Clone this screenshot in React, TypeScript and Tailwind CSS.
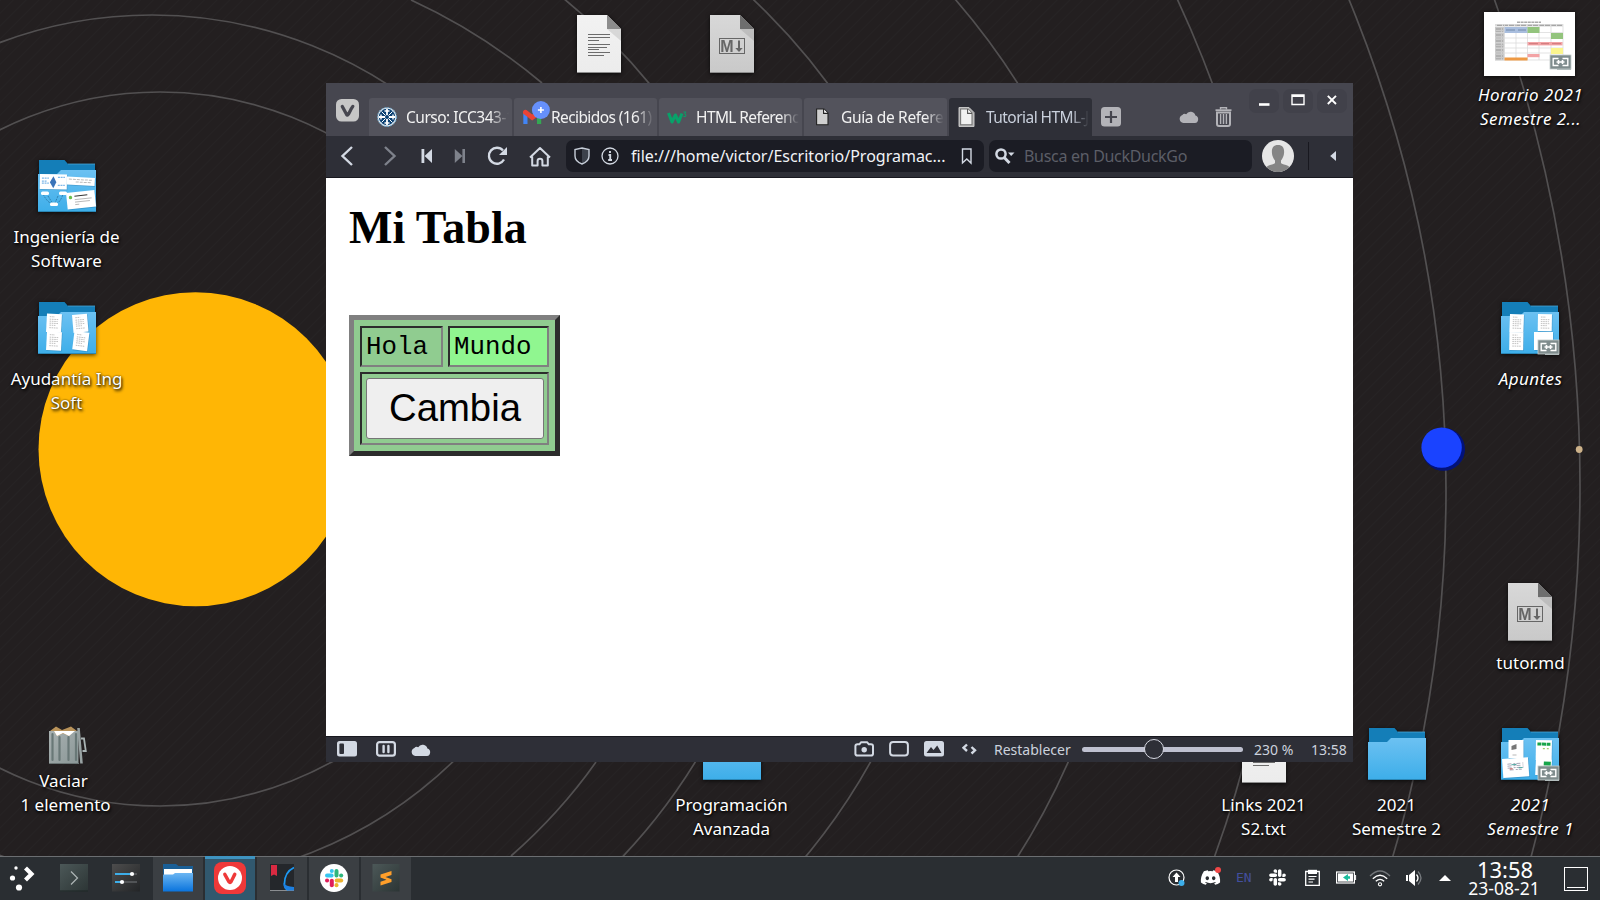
import React from "react";
import { FaDiscord, FaSlack } from "react-icons/fa";

const labelShadow = "[text-shadow:1px_2px_3px_rgba(0,0,0,0.9),0_0_2px_rgba(0,0,0,0.8)]";

function Wallpaper() {
  return (
    <svg className="absolute left-0 top-0" width="1600" height="900" viewBox="0 0 1600 900">
      <defs>
        <pattern id="weave" width="9" height="9" patternUnits="userSpaceOnUse" patternTransform="rotate(45)">
          <rect width="9" height="9" fill="#231f20" />
          <rect width="1" height="9" fill="#262324" />
        </pattern>
      </defs>
      <rect width="1600" height="900" fill="url(#weave)" />
      <g fill="none" stroke="#525051" strokeWidth="1.7">
        <circle cx="160" cy="449" r="357" />
        <circle cx="152" cy="449" r="434" />
        <path d="M411 0Q481 32 542 83" />
        <path d="M596 762Q560 813 511 856" />
        <circle cx="196" cy="455" r="586" />
        <circle cx="322" cy="456" r="628" />
        <circle cx="409" cy="470" r="721" />
        <circle cx="158" cy="473" r="1124" />
        <circle cx="158" cy="490" r="1288" />
        <circle cx="155" cy="486" r="1425" />
      </g>
      <circle cx="195.5" cy="449.2" r="157" fill="#ffb605" />
      <circle cx="1443.5" cy="449.3" r="21.5" fill="#02127a" />
      <circle cx="1441.6" cy="447.6" r="20.2" fill="#1a43ff" />
      <circle cx="1579.2" cy="449.5" r="3.4" fill="#cdb28a" />
    </svg>
  );
}

function LinkEmblem({ x, y }: { x: number; y: number }) {
  return (
    <g transform={`translate(${x} ${y})`}>
      <path d="M7 13H21V15H7z" fill="#a9b3b3" />
      <rect width="21" height="14" fill="#7f8c8d" stroke="#c4cccc" strokeWidth="0.8" />
      <path d="M8.5 3.5H3.2V10.5H8.5M12.5 3.5H17.8V10.5H12.5" fill="none" stroke="#fff" strokeWidth="1.4" />
      <path d="M6.5 7H14.5M8.5 5V9M12.5 5V9" fill="none" stroke="#fff" strokeWidth="1.6" />
    </g>
  );
}

function Paper({ x, y, w, h, r, children }: { x: number; y: number; w: number; h: number; r: number; children?: React.ReactNode }) {
  return (
    <g transform={`translate(${x} ${y}) rotate(${r})`}>
      <rect x="0.6" y="0.8" width={w} height={h} fill="#1d6f9f" opacity="0.4" />
      <rect width={w} height={h} fill="#fff" />
      {children}
    </g>
  );
}

const Scribble = () => (
  <path d="M3 3H8M3 5.5H12M3 7.5H11M3 9.5H12M3 11.5H9M3 14H12" stroke="#999" strokeWidth="0.6" strokeDasharray="1.6 0.7" fill="none" />
);

function Folder({ children, link }: { children?: React.ReactNode; link?: boolean }) {
  return (
    <svg width="62" height="56" viewBox="0 0 62 56" className="drop-shadow-[0_1px_2px_rgba(0,0,0,0.7)]">
      <defs>
        <linearGradient id="folderFront" x1="0" y1="0" x2="0" y2="1">
          <stop offset="0" stopColor="#6cc1f2" />
          <stop offset="1" stopColor="#3daee9" />
        </linearGradient>
      </defs>
      <path d="M1 0H26.5L30 4H57V18H1z" fill="#147eb8" />
      <path d="M30 4H57" stroke="#4aa6d6" strokeWidth="0.8" />
      <path d="M0 14H19L23 10H58V52H0z" fill="url(#folderFront)" />
      <path d="M0 51.5H58" stroke="#2a86b5" />
      {children}
      {link && <LinkEmblem x={37} y={38} />}
    </svg>
  );
}

function Doc({ md }: { md?: boolean }) {
  const id = md ? "sheetMd" : "sheetTxt";
  return (
    <svg width="44" height="58" viewBox="0 0 44 58" className="drop-shadow-[0_1px_2px_rgba(0,0,0,0.7)]">
      <defs>
        <linearGradient id={id} x1="0" y1="0" x2="0" y2="1">
          <stop offset="0" stopColor={md ? "#d8d8d8" : "#f2f2f2"} />
          <stop offset="1" stopColor={md ? "#c9c9c9" : "#ececec"} />
        </linearGradient>
      </defs>
      <path d="M0 0H30L44 14V58H0z" fill={`url(#${id})`} />
      <path d="M30 14H44V26z" fill="#000" opacity="0.1" />
      <path d="M30 0L44 14H30z" fill={md ? "#6e6e6e" : "#8c8c8c"} />
      <path d="M0 57.5H44" stroke="#8d8d8d" />
      {md ? (
        <g>
          <rect x="9.5" y="23.5" width="25" height="15" fill="none" stroke="#666" />
          <text x="10.2" y="36.6" fontSize="16" fontWeight="700" fill="#666" fontFamily="Liberation Sans, sans-serif">M</text>
          <path d="M29 25.5V35" stroke="#666" strokeWidth="2" />
          <path d="M25.3 33H32.7L29 37z" fill="#666" />
        </g>
      ) : (
        <path d="M11 19.5H33M11 22.5H33M11 25.5H22M11 29.5H33M11 32.5H30M11 34.5H22M11 37.5H33M11 40.5H27" stroke="#6c6c6c" strokeWidth="1" />
      )}
    </svg>
  );
}

function Place({ at, children }: { at: string; children: React.ReactNode }) {
  return <div className={`absolute ${at}`}>{children}</div>;
}

function Label({ at, lines, italic }: { at: string; lines: string[]; italic?: boolean }) {
  return (
    <div className={`absolute w-[133px] text-center text-[17px] leading-[24px] whitespace-nowrap text-white ${labelShadow} ${italic ? "tracking-[0.45px] italic" : ""} ${at}`}>
      {lines.map((l) => (
        <div key={l}>{l}</div>
      ))}
    </div>
  );
}

function Schedule() {
  return (
    <svg width="91" height="64" viewBox="0 0 91 64" className="drop-shadow-[0_1px_2px_rgba(0,0,0,0.7)]">
      <rect width="91" height="64" fill="#fff" />
      <path d="M33 10.2H57" stroke="#aaa" strokeWidth="1.5" strokeDasharray="3 0.6" />
      <rect x="11" y="12" width="68" height="2.6" fill="#ddd" />
      <rect x="11" y="15" width="9.5" height="33.5" fill="#c9c9c9" />
      <path d="M13 13.3H78M12 17H19M12 20H19M12 23H19M12 26H19M12 29H19M12 32H19M12 35H19M12 38H19M12 41H19M12 44H19M12 47H19" stroke="#999" strokeWidth="1" strokeDasharray="5 1" />
      <path d="M11 20.5H79M11 26H79M11 31H79M11 36H79M11 41H79M11 48H79M20.5 12V48M32 12V48M43.5 12V48M55 12V48M67 12V48M79 12V48" stroke="#dcdcdc" strokeWidth="0.8" />
      <rect x="20.5" y="15" width="23" height="6" fill="#a9bede" />
      <path d="M22 18H31M34 18H42" stroke="#7389a8" />
      <rect x="43.5" y="15" width="12" height="6" fill="#93c47d" />
      <rect x="67" y="21" width="12" height="6" fill="#93c47d" />
      <rect x="43.5" y="30" width="35" height="3.4" fill="#f3a3a5" />
      <path d="M45 31.7H54M57 31.7H65M68 31.7H77" stroke="#c26a6d" strokeWidth="0.8" />
      <rect x="43.5" y="42" width="12" height="3.2" fill="#f3a3a5" />
      <rect x="67" y="36" width="12" height="6" fill="#fbf58e" />
      <rect x="20.5" y="45.5" width="23" height="3" fill="#ee9a45" />
      <LinkEmblem x={66} y={43} />
    </svg>
  );
}

function Trash() {
  return (
    <svg width="40" height="40" viewBox="0 0 40 40">
      <defs>
        <linearGradient id="can" x1="0" y1="0" x2="1" y2="1">
          <stop offset="0" stopColor="#a8b1b1" />
          <stop offset="1" stopColor="#8b9797" />
        </linearGradient>
      </defs>
      <path d="M1 5L7 0.5L13 4L22 0.5L28 5V12H1z" fill="#b9935a" />
      <path d="M0 5H5L8 10L14 7.5L20 10L25 5H29.5V37H0z" fill="url(#can)" />
      <path d="M5 5H26L20 10L14 7L8 10z" fill="#fff" />
      <path d="M3.5 8V34M10.5 11V34M19.5 11V34M27 8V34" stroke="#697877" strokeWidth="2.2" strokeLinecap="round" />
      <path d="M0 37.5H30" stroke="#6a7474" />
      <path d="M29.5 2L32.5 37.5" stroke="#98a2a2" strokeWidth="2.6" />
      <path d="M32 12.5H35L36.8 25H33.5" fill="none" stroke="#a9b3b3" strokeWidth="1.8" />
    </svg>
  );
}

function Desktop() {
  return (
    <>
      <Place at="left-[38px] top-[160px]">
        <Folder>
          <Paper x={2} y={14} w={27} h={15} r={1}>
            <path d="M2 4H9M2 7H7M2 9H9M18 3H25M18 11H25" stroke="#7db7e8" strokeWidth="1.2" strokeDasharray="2 0.7" />
            <path d="M13.5 2L16.5 8L13.5 14L10 8z" fill="#3b74b9" />
          </Paper>
          <Paper x={29} y={16.5} w={28} h={8} r={3}>
            <path d="M2 2.5H26M9 5H24" stroke="#bbb" strokeDasharray="3 1" strokeWidth="1" />
          </Paper>
          <path d="M5 34Q10 44 16 44Q22 44 25 34M10 36L15 44M20 36L17 43" fill="none" stroke="#226a95" strokeWidth="0.7" strokeDasharray="2 1" />
          <rect x="3" y="31.5" width="8" height="3.6" rx="1.5" fill="#fff" />
          <rect x="21" y="31.5" width="8" height="3.6" rx="1.5" fill="#fff" />
          <rect x="12" y="42.5" width="8" height="3.6" rx="1.5" fill="#fff" />
          <Paper x={28} y={33} w={28.5} h={16.5} r={-6}>
            <circle cx="4" cy="5" r="1.7" fill="#6abf4b" />
            <path d="M8 4H21" stroke="#333" strokeWidth="1" />
            <path d="M8 7.5H25M8 10H23M8 12.5H12" stroke="#aaa" strokeWidth="0.8" />
          </Paper>
        </Folder>
      </Place>
      <Label at="left-0 top-[225px]" lines={["Ingeniería de", "Software"]} />

      <Place at="left-[38px] top-[302px]">
        <Folder>
          <Paper x={9} y={11.5} w={15} h={18.5} r={3}><Scribble /></Paper>
          <Paper x={9} y={29.5} w={15} h={18.5} r={3}><Scribble /></Paper>
          <Paper x={34} y={13} w={15} h={18} r={-5}><Scribble /></Paper>
          <Paper x={36.5} y={29} w={15} h={18.5} r={7}><Scribble /></Paper>
        </Folder>
      </Place>
      <Label at="left-0 top-[367px]" lines={["Ayudantía Ing", "Soft"]} />

      <Place at="left-[49px] top-[726px]"><Trash /></Place>
      <Label at="left-[-3px] top-[769px]" lines={["Vaciar"]} />
      <Label at="left-[-1px] top-[793px]" lines={["1 elemento"]} />

      <Place at="left-[577px] top-[15px]"><Doc /></Place>
      <Place at="left-[710px] top-[15px]"><Doc md /></Place>

      <Place at="left-[703px] top-[728px]"><Folder /></Place>
      <Label at="left-[665px] top-[793px]" lines={["Programación", "Avanzada"]} />

      <Place at="left-[1242px] top-[725px]"><Doc /></Place>
      <Label at="left-[1197px] top-[793px]" lines={["Links 2021", "S2.txt"]} />

      <Place at="left-[1368px] top-[728px]"><Folder /></Place>
      <Label at="left-[1330px] top-[793px]" lines={["2021", "Semestre 2"]} />

      <Place at="left-[1501px] top-[728px]">
        <Folder link>
          <Paper x={7.5} y={12} w={15} h={18} r={0}>
            <path d="M3 6L8 4V9L3 10z" fill="#777" />
            <path d="M4 15H8" stroke="#999" strokeWidth="0.7" />
          </Paper>
          <Paper x={35} y={12} w={16} h={20} r={1}>
            <path d="M1.5 4H14.5" stroke="#17a54a" strokeWidth="3" strokeDasharray="4 0.6" />
            <path d="M7 8.5H14" stroke="#9bcb67" strokeWidth="1.2" strokeDasharray="2 2" />
          </Paper>
          <Paper x={35} y={31} w={16} h={16} r={3}>
            <path d="M8 4H15" stroke="#17a54a" strokeWidth="4" />
          </Paper>
          <Paper x={1} y={31} w={26} h={19} r={-4}>
            <path d="M5 5.5H21M5 7.5H21M5 9.5H21M7 11.5H19" stroke="#a9a9b8" strokeWidth="1" strokeDasharray="4 2 2 1" />
            <path d="M9 6.5H14M16 10H20" stroke="#4ba7a0" strokeWidth="1" />
            <path d="M7 10.5H10" stroke="#c0504d" strokeWidth="1" />
          </Paper>
        </Folder>
      </Place>
      <Label italic at="left-[1464px] top-[793px]" lines={["2021", "Semestre 1"]} />

      <Place at="left-[1508px] top-[583px]"><Doc md /></Place>
      <Label at="left-[1464px] top-[651px]" lines={["tutor.md"]} />

      <Place at="left-[1501px] top-[302px]">
        <Folder link>
          <Paper x={9} y={12} w={14} h={18} r={2}><Scribble /></Paper>
          <Paper x={8.5} y={30} w={14} h={18} r={1}><Scribble /></Paper>
          <Paper x={37} y={12} w={14} h={17} r={1}><Scribble /></Paper>
          <Paper x={33} y={30} w={19} h={18} r={0} />
        </Folder>
      </Place>
      <Label italic at="left-[1464px] top-[367px]" lines={["Apuntes"]} />

      <Place at="left-[1484px] top-[12px]"><Schedule /></Place>
      <Label italic at="left-[1464px] top-[83px]" lines={["Horario 2021", "Semestre 2..."]} />
    </>
  );
}

const tabFade = "[mask-image:linear-gradient(to_right,#000_82%,transparent_100%)]";

function Tab({ icon, slot, title, active, tracking }: { icon: React.ReactNode; slot: string; title: string; active?: boolean; tracking: string }) {
  return (
    <div className={`flex h-[38px] w-[143px] items-center rounded-t-[3px] ${active ? "bg-[#2e2f37] text-[#c9d0dc]" : "bg-[#53535c] text-[#f2f2f2]"}`}>
      <div className={`flex shrink-0 items-center justify-start ${slot}`}>{icon}</div>
      <div className={`mr-[3px] min-w-0 flex-1 overflow-hidden text-[15.5px] leading-6 whitespace-nowrap ${tracking} ${tabFade}`}>{title}</div>
    </div>
  );
}

const Cloud = ({ color }: { color: string }) => (
  <svg width="20" height="13" viewBox="0 0 20 13">
    <path d="M4.3 13A4.2 4.2 0 0 1 3.4 4.9Q5 2.8 7.2 4.2A5 5 0 0 1 16.4 5.6A3.8 3.8 0 0 1 16 13z" fill={color} />
  </svg>
);

const PageIcon = ({ active }: { active?: boolean }) => (
  <svg width="17" height="20" viewBox="0 0 17 20">
    {active && <path d="M1 0.5H11L16 5.5V19.5H1z" fill="#b5b5b5" stroke="#c5c5c5" />}
    <path d="M2.6 2H10L14 6V17.8H2.6z" fill={active ? "#f1f1f1" : "#cfcfcf"} stroke={active ? "#777" : "#222"} strokeWidth="1.1" />
    <path d="M9.6 2V6.4H14" fill="#fff" stroke={active ? "#555" : "#222"} strokeWidth="1.1" />
  </svg>
);

function TabStrip() {
  return (
    <div className="flex h-[53px] shrink-0 bg-[#46464f]">
      <svg className="mt-4 ml-[10px] shrink-0" width="23" height="23" viewBox="0 0 23 23">
        <rect width="23" height="22.5" rx="5.5" fill="#c6c6c6" />
        <path d="M6.3 7.5L10.5 15.3Q11.4 16.8 12.4 15.2L14.4 11.4Q15.3 9.5 16.8 7.4" fill="none" stroke="#46464f" strokeWidth="3.3" strokeLinecap="round" strokeLinejoin="round" />
      </svg>
      <div className="mt-[15px] ml-[10px] flex gap-[2px]">
        <Tab
          title="Curso: ICC343-1"
          slot="w-[37px] pl-2"
          tracking="tracking-[-0.5px]"
          icon={
            <svg width="20" height="20" viewBox="0 0 20 20">
              <circle cx="10" cy="10" r="9.5" fill="#dfebf3" stroke="#6ea4c8" strokeDasharray="2 1.2" />
              <circle cx="10" cy="10" r="8.2" fill="#0b4173" />
              <path d="M10 2V18M2 10H18" stroke="#fff" strokeWidth="1.8" />
              <path d="M4.5 4.5L15.5 15.5M15.5 4.5L4.5 15.5" stroke="#fff" strokeWidth="1" />
              <path d="M7.5 4H12.5M7.5 16H12.5M4 7.5V12.5M16 7.5V12.5" stroke="#fff" strokeWidth="1.4" />
              <circle cx="10" cy="10" r="2" fill="#0b4173" />
            </svg>
          }
        />
        <Tab
          title="Recibidos (161)"
          slot="w-[37px] pl-[8px]"
          tracking="tracking-[-0.6px]"
          icon={
            <svg width="29" height="26" viewBox="0 0 29 26" className="mb-[11px]">
              <path d="M1.3 13V25H5.5V14z" fill="#4285f4" />
              <path d="M15 14V25H19.2V13z" fill="#34a853" />
              <path d="M1 12.5Q2 9.8 4.5 11L10.2 15.5L16 11Q18.5 9.8 19.5 12.5V14.5L10.2 21.5L1 14.5z" fill="#ea4335" />
              <circle cx="18.9" cy="11" r="9" fill="#6690fb" />
              <path d="M18.9 8V14M15.9 11H21.9" stroke="#fff" strokeWidth="1.6" />
            </svg>
          }
        />
        <Tab
          title="HTML Reference"
          slot="w-[37px] pl-2"
          tracking="tracking-[-0.6px]"
          icon={
            <svg width="21" height="15" viewBox="0 0 21 15">
              <path d="M1.5 3L5 12L8.4 5L11.6 12L15 3.5" fill="none" stroke="#08a169" strokeWidth="3.1" strokeLinejoin="round" />
              <path d="M16.5 2H19L17.6 4Q19.4 4.2 19 5.8Q18.3 7.2 16.4 6.4" fill="none" stroke="#08a169" strokeWidth="1" />
            </svg>
          }
        />
        <Tab title="Guía de Referencia" slot="w-[37px] pl-[10px]" tracking="tracking-[-0.35px]" icon={<PageIcon />} />
        <Tab title="Tutorial HTML-JS" active slot="w-[37px] pl-[9px]" tracking="tracking-[-0.55px]" icon={<PageIcon active />} />
      </div>
      <svg className="mt-6 ml-[9px] shrink-0" width="20" height="20" viewBox="0 0 20 20">
        <rect width="20" height="19.5" rx="3.5" fill="#b3b3b8" />
        <path d="M10 4V16M4 10H16" stroke="#46464f" strokeWidth="2.2" />
      </svg>
      <div className="mt-[27px] ml-[58px]"><Cloud color="#b3b3b8" /></div>
      <svg className="mt-6 ml-[16px] shrink-0" width="17" height="20" viewBox="0 0 17 20">
        <path d="M0.5 3.2H16.5" stroke="#b3b3b8" strokeWidth="1.8" />
        <path d="M5.5 2.6V0.8H11.5V2.6" fill="none" stroke="#b3b3b8" strokeWidth="1.4" />
        <path d="M2 5.5H15V17Q15 19 13 19H4Q2 19 2 17z" fill="none" stroke="#b3b3b8" strokeWidth="2" />
        <path d="M5.6 7V17M8.5 7V17M11.4 7V17" stroke="#b3b3b8" strokeWidth="1.4" />
      </svg>
      <div className="mt-[6px] ml-[17px] flex gap-1">
        <div className="flex h-6 w-[30px] items-center justify-center rounded-[7px] bg-[#41414a] pb-[2px]">
          <svg width="12" height="12"><path d="M1 10.5H11.5" stroke="#fff" strokeWidth="2.6" /></svg>
        </div>
        <div className="flex h-6 w-[30px] items-center justify-center rounded-[7px] bg-[#41414a] pb-[2px]">
          <svg width="14" height="12"><path d="M1 1H13V10.5H1zM1 2.2H13" fill="none" stroke="#fff" strokeWidth="1.4" /></svg>
        </div>
        <div className="flex h-6 w-[30px] items-center justify-center rounded-[7px] bg-[#41414a] pb-[2px]">
          <svg width="12" height="12"><path d="M1.8 1.8L10 10M10 1.8L1.8 10" stroke="#fff" strokeWidth="1.9" /></svg>
        </div>
      </div>
    </div>
  );
}

function NavBar() {
  const slot = "flex shrink-0 items-center justify-center";
  return (
    <div className="flex h-[42px] shrink-0 items-center border-b border-[#18181f] bg-[#2e2f37] pb-px">
      <div className={`${slot} w-[42px]`}>
        <svg width="14" height="20"><path d="M12 1L2.5 10L12 19" fill="none" stroke="#d3d9e3" strokeWidth="2.4" /></svg>
      </div>
      <div className={`${slot} w-[44px]`}>
        <svg width="14" height="20"><path d="M2 1L11.5 10L2 19" fill="none" stroke="#7e828b" strokeWidth="2.4" /></svg>
      </div>
      <div className={`${slot} w-[30px]`}>
        <svg width="12" height="16"><path d="M0.5 1H3.3V15H0.5zM11 1V15L3.6 8z" fill="#d3d9e3" /></svg>
      </div>
      <div className={`${slot} w-[35px]`}>
        <svg width="12" height="16"><path d="M11 1H8.4V15H11zM0.8 1V15L8.4 8z" fill="#7e828b" /></svg>
      </div>
      <div className={`${slot} w-[40px]`}>
        <svg width="21" height="20" viewBox="0 0 21 20">
          <path d="M17 13.5A8 8 0 1 1 16 4.5" fill="none" stroke="#d3d9e3" strokeWidth="2.3" />
          <path d="M20 1V9H12z" fill="#d3d9e3" />
        </svg>
      </div>
      <div className={`${slot} w-[46px]`}>
        <svg width="22" height="21" viewBox="0 0 22 21">
          <path d="M1 11.5L11 2L21 11.5M3.2 10.5V19.5H8.6V15Q8.6 12.8 11 12.8Q13.4 12.8 13.4 15V19.5H18.8V10.5" fill="none" stroke="#d3d9e3" strokeWidth="2" strokeLinejoin="round" />
        </svg>
      </div>
      <div className="ml-[3px] flex h-8 w-[418px] shrink-0 items-center rounded-[7px] bg-[#1b1c24]">
        <svg className="ml-2" width="16" height="18" viewBox="0 0 16 18">
          <path d="M8 1L15 2.5V9Q15 14 8 17z" fill="#3c414b" />
          <path d="M8 1L15 2.5V9Q15 14.5 8 17Q1 14.5 1 9V2.5z" fill="none" stroke="#c5ccd7" strokeWidth="1.4" />
        </svg>
        <svg className="ml-[11px]" width="18" height="18" viewBox="0 0 18 18">
          <circle cx="9" cy="9" r="8" fill="none" stroke="#d3d9e3" strokeWidth="1.3" />
          <path d="M9 4V6M7.5 8H9.2V13M7.2 13H11" fill="none" stroke="#d3d9e3" strokeWidth="1.9" />
        </svg>
        <span className="ml-3 w-[316px] text-[16px] whitespace-nowrap text-[#f1f3f7]">file:///home/victor/Escritorio/Programac...</span>
        <svg className="ml-[14px]" width="12" height="17"><path d="M1.5 1H10V15L5.8 11L1.5 15z" fill="none" stroke="#d3d9e3" strokeWidth="1.4" /></svg>
      </div>
      <div className="ml-[5px] flex h-8 w-[263px] shrink-0 items-center rounded-[7px] bg-[#1b1c24]">
        <svg className="ml-[6px]" width="20" height="18" viewBox="0 0 20 18">
          <circle cx="6" cy="7" r="4.6" fill="none" stroke="#d3d9e3" strokeWidth="2.5" />
          <path d="M9.2 10.5L14.5 16" stroke="#d3d9e3" strokeWidth="3" />
          <path d="M13 5.5H19.5L16.2 9z" fill="#d3d9e3" />
        </svg>
        <span className="ml-[9px] text-[16px] tracking-[-0.3px] whitespace-nowrap text-[#5c5e67]">Busca en DuckDuckGo</span>
      </div>
      <svg className="ml-[10px] shrink-0" width="32" height="32" viewBox="0 0 32 32">
        <circle cx="16" cy="16" r="16" fill="#e6e6e6" />
        <path d="M16 5C11.5 5 9.7 8 9.9 12.5C10 16 11.5 18.5 13 20.5V23Q12.5 24 8 25Q5 26 4.6 27.3A16 16 0 0 0 27.4 27.3Q27 26 24 25Q19.5 24 19 23V20.5C20.5 18.5 22 16 22.1 12.5C22.3 8 20.5 5 16 5z" fill="#848484" />
      </svg>
      <div className="ml-[14px] h-7 w-px bg-[#18181f]" />
      <svg className="ml-[20px]" width="8" height="12"><path d="M7 1V11L1.2 6z" fill="#d3d9e3" /></svg>
    </div>
  );
}

function Page() {
  const cell = "border-2 border-t-[#2c2c2c] border-l-[#2c2c2c] border-r-[#808080] border-b-[#808080] text-black";
  return (
    <div className="h-[558px] shrink-0 bg-white pl-[23px] text-black">
      <h1 className="pt-[23px] font-['Liberation_Serif',serif] text-[46px] leading-[53px] font-bold">Mi Tabla</h1>
      <div className="mt-[61px] w-[211px] border-[5px] border-t-[#808080] border-l-[#808080] border-r-[#2c2c2c] border-b-[#2c2c2c] bg-[#90cc90] p-[6px]">
        <div className="flex gap-[5px] font-['Liberation_Mono',monospace] text-[25.8px] leading-[39px]">
          <div className={`h-[41px] w-[83px] pl-1 ${cell}`}>Hola</div>
          <div className={`h-[41px] w-[101px] bg-[#90f690] pl-1 ${cell}`}>Mundo</div>
        </div>
        <div className={`mt-[5px] h-[73px] p-1 ${cell}`}>
          <button className="block h-[61px] w-[178px] rounded-[3px] border border-[#767676] bg-[#efefef] pb-[2px] font-['Liberation_Sans',sans-serif] text-[38.3px] leading-[56px]">Cambia</button>
        </div>
      </div>
    </div>
  );
}

function StatusBar() {
  const c = "#d3d9e3";
  return (
    <div className="flex h-[26px] shrink-0 items-center border-t border-[#18181f] bg-[#2e2f37] pb-px text-[14px] text-[#ccd2dd] [&>*]:shrink-0">
      <svg className="ml-[11px]" width="20" height="16"><rect width="20" height="15.5" rx="2.5" fill={c} /><rect x="2.4" y="2.6" width="4.6" height="10.4" rx="1" fill="#2e2f37" /></svg>
      <svg className="ml-[19px]" width="20" height="16"><rect x="1.1" y="1.1" width="17.8" height="13.6" rx="2.5" fill="none" stroke={c} strokeWidth="2.2" /><path d="M7.6 5V11M12.4 5V11" stroke={c} strokeWidth="2.4" strokeLinecap="round" /></svg>
      <div className="ml-[15px]"><Cloud color={c} /></div>
      <svg className="ml-[423px]" width="21" height="16">
        <path d="M3.5 3.2H5.5L7.2 1.2H13L14.8 3.2H17Q19 3.2 19 5.2V12.8Q19 14.6 17 14.6H3.5Q1.4 14.6 1.4 12.8V5.2Q1.4 3.2 3.5 3.2z" fill="none" stroke={c} strokeWidth="2" /><circle cx="10.2" cy="8.8" r="2.7" fill={c} />
      </svg>
      <svg className="ml-[14px]" width="20" height="16"><rect x="1.1" y="1.1" width="17.8" height="13.4" rx="3" fill="none" stroke={c} strokeWidth="2" /></svg>
      <svg className="ml-[15px]" width="20" height="16"><rect width="20" height="15.5" rx="2.5" fill={c} /><path d="M2.5 12L7 6L9.5 9L13.2 4.5L17.5 12z" fill="#2e2f37" /></svg>
      <svg className="ml-[18px]" width="15" height="12"><path d="M5 1.5L1.5 4.8L5 8M9.5 4L13 7.3L9.5 10.5" fill="none" stroke={c} strokeWidth="2.4" /></svg>
      <span className="ml-[17px] w-[77px] whitespace-nowrap">Restablecer</span>
      <svg className="ml-[11px]" width="162" height="22">
        <path d="M2.5 11.5H158.5" stroke="#bfc1d0" strokeWidth="5" strokeLinecap="round" />
        <circle cx="72" cy="11" r="9.5" fill="#2e2f37" stroke="#d6d8e2" />
      </svg>
      <span className="ml-[10px] w-[57px] whitespace-nowrap">230 %</span>
      <span className="whitespace-nowrap">13:58</span>
    </div>
  );
}

function BrowserWindow() {
  return (
    <div className="absolute top-[83px] left-[326px] flex h-[679px] w-[1027px] flex-col overflow-hidden">
      <TabStrip />
      <NavBar />
      <Page />
      <StatusBar />
    </div>
  );
}

function SlackMark() {
  return (
    <g strokeWidth="4" strokeLinecap="round" fill="none">
      <path d="M7 11.5H11.6" stroke="#36c5f0" /><path d="M11.8 7V7.1" stroke="#36c5f0" />
      <path d="M16.5 7V11.5" stroke="#2eb67d" /><path d="M21.1 11.6H21.2" stroke="#2eb67d" />
      <path d="M16.7 16.5H21.2" stroke="#ecb22e" /><path d="M16.5 21.1V21.2" stroke="#ecb22e" />
      <path d="M11.8 16.7V21.2" stroke="#e01e5a" /><path d="M7 16.5H7.1" stroke="#e01e5a" />
    </g>
  );
}

function Taskbar() {
  const task = "flex h-[43px] w-[50px] items-center justify-center bg-[#3b3f43] pb-px";
  return (
    <div className="absolute top-[856px] left-0 flex h-[44px] w-full items-center border-t border-[#6b6e71] bg-[#2a2e32]">
      <svg className="mb-px ml-[9px] shrink-0" width="26" height="26" viewBox="0 0 26 26" fill="#fff">
        <circle cx="7" cy="3" r="1.7" /><circle cx="3.5" cy="13" r="2.6" /><circle cx="10" cy="22.5" r="3.1" />
        <path d="M16.5 3L22.5 9L16.5 15" fill="none" stroke="#fff" strokeWidth="4.2" />
      </svg>
      <svg className="mb-px ml-[25px] shrink-0" width="28" height="28" viewBox="0 0 28 28">
        <defs><linearGradient id="term" x1="0" y1="0" x2="1" y2="1"><stop offset="0" stopColor="#4c5858" /><stop offset="1" stopColor="#2c3535" /></linearGradient></defs>
        <rect width="28" height="27.5" fill="url(#term)" />
        <path d="M11 7.5L17.5 14L11 20.5" fill="none" stroke="#aeb6b6" strokeWidth="1.2" />
        <path d="M0 27H28" stroke="#1d2424" />
      </svg>
      <svg className="mb-px ml-6 shrink-0" width="28" height="28" viewBox="0 0 28 28">
        <defs><linearGradient id="sett" x1="0" y1="0" x2="1" y2="1"><stop offset="0" stopColor="#4d4d4d" /><stop offset="1" stopColor="#232527" /></linearGradient></defs>
        <rect width="28" height="27.5" fill="url(#sett)" />
        <path d="M3 10H25M3 18H25" stroke="#5d6063" strokeWidth="1.6" />
        <path d="M3 10H20M3 18H10" stroke="#3daee9" strokeWidth="1.8" />
        <circle cx="20" cy="10" r="2.1" fill="#fff" /><circle cx="10" cy="18" r="2.1" fill="#fff" />
      </svg>
      <div className="ml-[13px] flex shrink-0 gap-[2px]">
        <div className={task}>
          <svg width="30" height="28" viewBox="0 0 30 28">
            <defs><linearGradient id="fm" x1="0" y1="0" x2="0" y2="1"><stop offset="0" stopColor="#6cb6f2" /><stop offset="1" stopColor="#0a74dd" /></linearGradient></defs>
            <path d="M0 0H13L15.5 2H30V10H0z" fill="#1a5f96" />
            <rect x="1" y="5" width="28" height="8" fill="#fff" />
            <path d="M0 10.5H10L12 9H30V27.5H0z" fill="url(#fm)" />
          </svg>
        </div>
        <div className="flex h-[43px] w-[50px] flex-col items-center bg-[#31586e]">
          <div className="-mt-px h-[3px] w-full shrink-0 bg-[#3e93c0]" />
          <svg className="mt-[3px]" width="32" height="32" viewBox="0 0 32 32">
            <rect width="32" height="32" rx="8" fill="#ef3939" />
            <circle cx="16" cy="16" r="12" fill="#fff" />
            <path d="M10.8 12.3L15 19.8Q16 21.2 17 19.7L19.2 15.5Q20 14 20.8 12.3" fill="none" stroke="#ef3939" strokeWidth="3.4" strokeLinecap="round" strokeLinejoin="round" />
          </svg>
        </div>
        <div className={task}>
          <svg width="24" height="28" viewBox="0 0 24 28">
            <rect width="24" height="27" fill="#24272b" />
            <path d="M0 26.5H24" stroke="#8a8d90" />
            <path d="M1 1H7V12L4 10.5L1 12z" fill="#da2a42" />
            <path d="M24 3.5Q14.5 8 14.4 20Q14.4 24.5 18 26" fill="none" stroke="#1d99f3" strokeWidth="1.8" />
            <path d="M18 26.5Q13.5 25 13.5 19Q15.5 22.5 24 23V26.5z" fill="#1d7fe0" />
          </svg>
        </div>
        <div className={task}>
          <svg width="28" height="28" viewBox="0 0 28 28"><circle cx="14" cy="14" r="14" fill="#fff" /><SlackMark /></svg>
        </div>
        <div className={task}>
          <svg width="28" height="28" viewBox="0 0 28 28">
            <rect x="0.5" width="27" height="27.5" fill="url(#term)" />
            <path d="M8.5 10.5L19.5 7V11L13.5 13L19.5 15.2V18L8.5 21.5V17.7L14.5 15.7L8.5 13.5z" fill="#ff9f2a" />
          </svg>
        </div>
      </div>
      <div className="ml-auto flex h-full shrink-0 items-center text-white">
        <svg className="mb-[2px]" width="18" height="18" viewBox="0 0 18 18">
          <circle cx="8.5" cy="8.5" r="7.5" fill="none" stroke="#fff" strokeWidth="1.2" />
          <path d="M8.5 3.5L12.5 8H10V13H7V8H4.5z" fill="#fff" /><circle cx="13.5" cy="14" r="3" fill="#3daee9" />
        </svg>
        <div className="relative mb-[2px] ml-[14px] flex w-[22px]">
          <FaDiscord size={21} />
          <div className="absolute top-0 right-[1px] h-[6px] w-[6px] rounded-full bg-[#f04747]" />
        </div>
        <span className="mb-[2px] ml-[14px] w-[20px] font-['DejaVu_Sans_Mono',monospace] text-[13px] tracking-[-0.2px] text-[#434f9e]">EN</span>
        <FaSlack className="mb-[2px] ml-[12px]" size={19} />
        <svg className="mb-[2px] ml-[18px]" width="15" height="17" viewBox="0 0 15 17">
          <path d="M0.7 2.5H14.3V16.3H0.7z" fill="none" stroke="#fff" strokeWidth="1.3" /><path d="M3 0.8H12V5H3z" fill="#fff" /><path d="M3.5 7.5H11.5M3.5 10.2H9.5M3.5 13H8" stroke="#fff" strokeWidth="1.2" />
        </svg>
        <svg className="mb-[2px] ml-[16px]" width="21" height="13" viewBox="0 0 21 13">
          <rect x="0.6" y="1" width="17.8" height="11" fill="none" stroke="#fff" strokeWidth="1.2" /><rect x="2" y="2.4" width="15" height="8.2" fill="#fff" /><path d="M19.6 4V9" stroke="#fff" />
          <path d="M7 6.5L12 3V5.2H14V7.8H12V10z" fill="#1abc9c" />
        </svg>
        <svg className="mb-[2px] ml-[12px]" width="22" height="18" viewBox="0 0 22 18" fill="none">
          <path d="M1 7Q11 -3 21 7" stroke="#72767a" strokeWidth="1.3" /><path d="M3.8 9.8Q11 2.8 18.2 9.8M6.8 12.3Q11 8.5 15.2 12.3" stroke="#fff" strokeWidth="1.3" /><circle cx="11" cy="15.3" r="1.6" stroke="#fff" strokeWidth="1.1" />
        </svg>
        <svg className="mb-[2px] ml-[15px]" width="17" height="18" viewBox="0 0 17 18">
          <path d="M0 6H2V12H0zM3 6L9 1V17L3 12z" fill="#fff" /><path d="M10.5 5.5Q13.5 9 10.5 12.5" fill="none" stroke="#fff" strokeWidth="1.3" /><path d="M12 2.5Q18 9 12 15.5" fill="none" stroke="#777b7f" strokeWidth="1.3" />
        </svg>
        <svg className="mb-px ml-[16px]" width="12" height="6"><path d="M0 6L6 0L12 6z" fill="#fff" /></svg>
        <div className="ml-[13px] w-[80px] text-center whitespace-nowrap">
          <div className="pl-[2px] text-[22px] leading-[20px]">13:58</div>
          <div className="text-[17.5px] leading-[19px]">23-08-21</div>
        </div>
        <svg className="mr-[12px] ml-[20px]" width="24" height="24"><rect x="0.5" y="0.5" width="23" height="23" fill="none" stroke="#fff" /><path d="M3 20.5H21" stroke="#fff" /></svg>
      </div>
    </div>
  );
}

export default function App() {
  return (
    <div className="relative h-[900px] w-[1600px] overflow-hidden bg-[#231f20] font-['Noto_Sans',sans-serif]">
      <Wallpaper />
      <Desktop />
      <BrowserWindow />
      <Taskbar />
    </div>
  );
}
